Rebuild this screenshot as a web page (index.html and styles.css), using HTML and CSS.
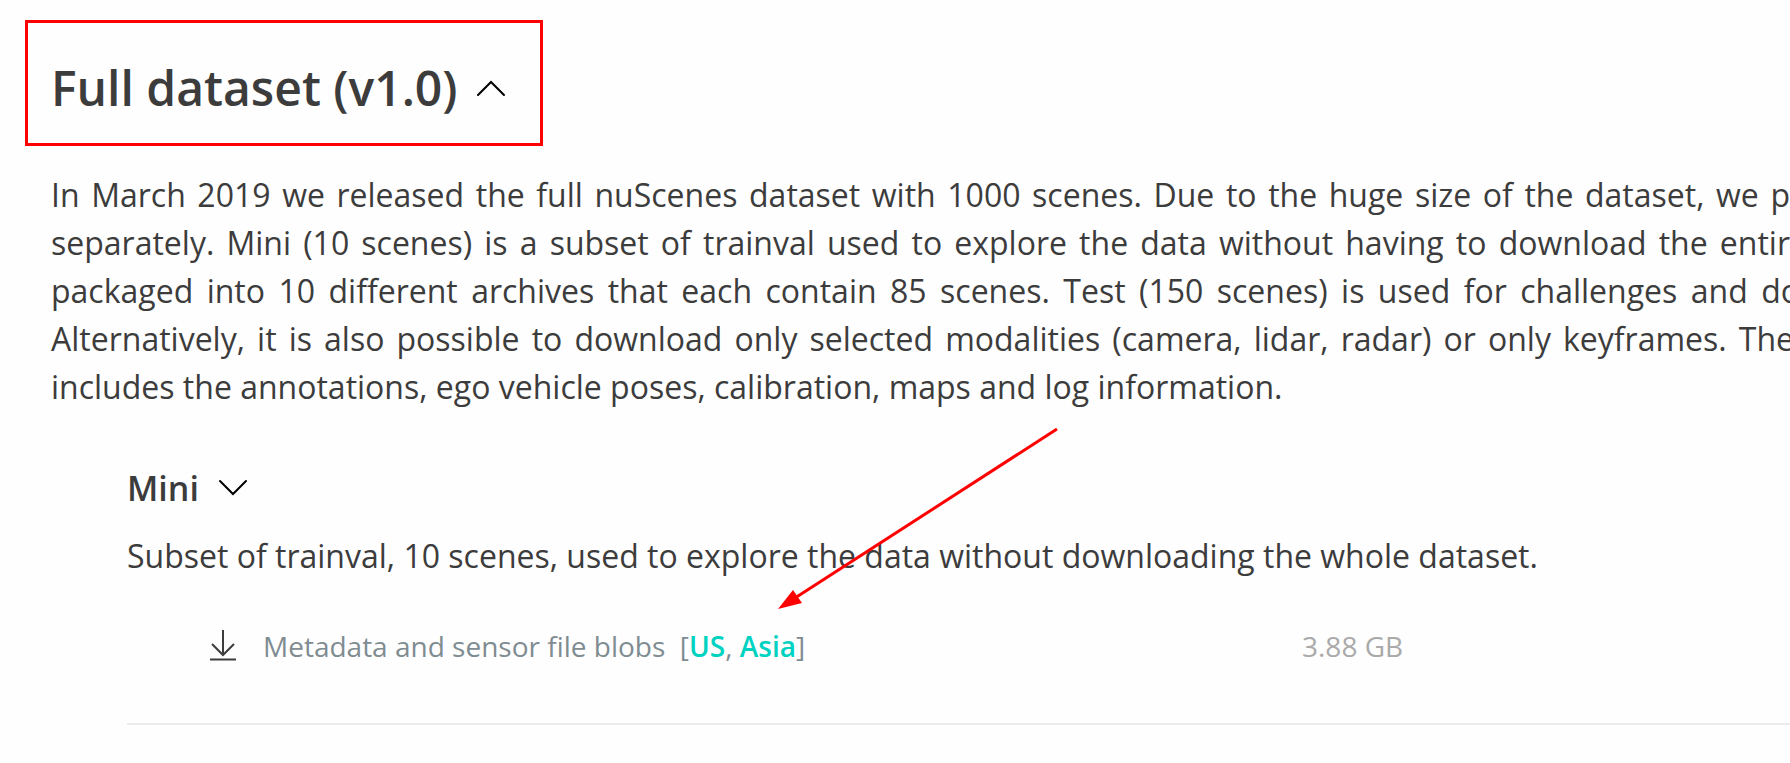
FILE: index.html
```html
<!DOCTYPE html>
<html lang="en">
<head>
<meta charset="utf-8">
<title>Full dataset (v1.0)</title>
<link rel="stylesheet" href="styles.css">
</head>
<body>
<main class="page">
  <h2 class="title">
    <button class="toggle" type="button" aria-expanded="true">Full dataset (v1.0)
      <svg class="chevron" viewBox="0 0 30 18" aria-hidden="true"><path d="M2 16 15 3 28 16"/></svg>
    </button>
  </h2>
  <p class="intro">
    <span class="line">In March 2019 we released the full nuScenes dataset with 1000 scenes. Due to the huge size of the dataset, we p</span>
    <span class="line">separately. Mini (10 scenes) is a subset of trainval used to explore the data without having to download the entir</span>
    <span class="line line-bleed">packaged into 10 different archives that each contain 85 scenes. Test (150 scenes) is used for challenges and do</span>
    <span class="line line-bleed-small">Alternatively, it is also possible to download only selected modalities (camera, lidar, radar) or only keyframes. The</span>
    <span class="line line-last">includes the annotations, ego vehicle poses, calibration, maps and log information.</span>
  </p>
  <section class="split">
    <h3 class="split-title">
      <button class="toggle" type="button" aria-expanded="true">Mini
        <svg class="chevron" viewBox="0 0 30 18" aria-hidden="true"><path d="M2 2 15 15 28 2"/></svg>
      </button>
    </h3>
    <p class="split-text">Subset of trainval, 10 scenes, used to explore the data without downloading the whole dataset.</p>
    <ul class="files">
      <li class="file">
        <svg class="download" viewBox="0 0 28 32" aria-hidden="true"><path d="M14 0V24M3 14 14 25 25 14M1 29.500H27"/></svg>
        <span class="file-name">Metadata and sensor file blobs&nbsp; [<a class="link" href="#us">US</a>, <a class="link" href="#asia">Asia</a>]</span>
        <span class="file-size">3.88 GB</span>
      </li>
    </ul>
  </section>
  <svg class="arrow" viewBox="0 0 282 184" aria-hidden="true"><path class="arrow-line" d="M280 2 18 171"/><path class="arrow-head" d="M1 182 16 163 25 176Z"/></svg>
</main>
</body>
</html>
```
FILE: styles.css
```css
* {
  box-sizing: border-box;
}

body {
  margin: 0;
  background: #fefefe;
  color: #3c3c3c;
  font-family: "Open Sans", "Noto Sans", sans-serif;
  font-size: 32px;
  line-height: 48px;
}

h2, h3, p, ul {
  margin: 0;
  padding: 0;
}

.page {
  position: relative;
  overflow: hidden;
  padding: 20px 0 38px 25px;
}

.title {
  width: fit-content;
  border: 3px solid #f00;
  padding: 33px 34px 23px 23px;
  font-size: 48px;
  line-height: 64px;
}

.toggle {
  display: flex;
  align-items: center;
  gap: 19px;
  border: 0;
  padding: 0;
  background: none;
  color: inherit;
  font: inherit;
  font-weight: 600;
  cursor: pointer;
}

.chevron {
  width: 30px;
  height: 18px;
  fill: none;
  stroke: #000;
  stroke-width: 2;
  stroke-linecap: round;
}

.intro {
  margin: 25px 0 53px 26px;
}

.line {
  display: block;
  text-align: justify;
  text-align-last: justify;
}

.line-bleed {
  margin-right: -10px;
}

.line-bleed-small {
  margin-right: -4px;
}

.line-last {
  text-align-last: left;
}

.split {
  margin-left: 102px;
  border-bottom: 2px solid #ececec;
  padding-bottom: 53px;
}

.split-title {
  font-size: 34px;
}

.split-text {
  margin: 20px 0 42px;
}

.files {
  padding-left: 82px;
  font-size: 28px;
  list-style: none;
}

.file {
  display: flex;
  align-items: center;
}

.download {
  width: 28px;
  height: 32px;
  margin-right: 26px;
  fill: none;
  stroke: #3c3c3c;
  stroke-width: 2;
}

.file-name {
  flex: 0 0 1039px;
  color: #7f8c91;
}

.link {
  color: #00d2c1;
  font-weight: 600;
  text-decoration: none;
}

.file-size {
  color: #aaa;
}

.arrow {
  position: absolute;
  top: 427px;
  left: 777px;
  width: 282px;
  height: 184px;
}

.arrow-line {
  stroke: #f00;
  stroke-width: 3;
}

.arrow-head {
  fill: #f00;
}
```
